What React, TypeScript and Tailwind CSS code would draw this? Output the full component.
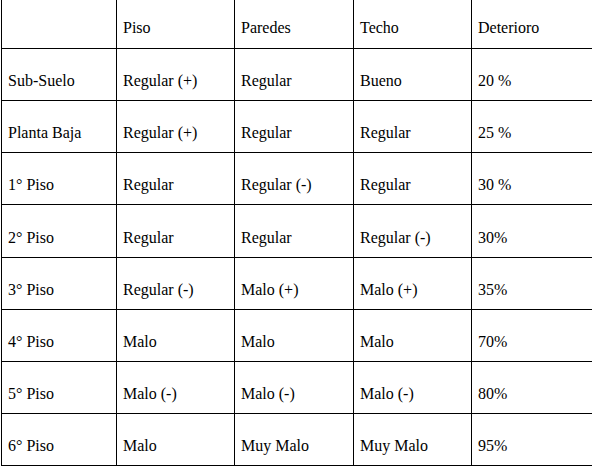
const HEAD = ['', 'Piso', 'Paredes', 'Techo', 'Deterioro'];

const ROWS = [
  ['Sub-Suelo', 'Regular (+)', 'Regular', 'Bueno', '20 %'],
  ['Planta Baja', 'Regular (+)', 'Regular', 'Regular', '25 %'],
  ['1° Piso', 'Regular', 'Regular (-)', 'Regular', '30 %'],
  ['2° Piso', 'Regular', 'Regular', 'Regular (-)', '30%'],
  ['3° Piso', 'Regular (-)', 'Malo (+)', 'Malo (+)', '35%'],
  ['4° Piso', 'Malo', 'Malo', 'Malo', '70%'],
  ['5° Piso', 'Malo (-)', 'Malo (-)', 'Malo (-)', '80%'],
  ['6° Piso', 'Malo', 'Muy Malo', 'Muy Malo', '95%'],
];

function Cell({ text, last, head, tall }: { text: string; last: boolean; head?: boolean; tall?: boolean }) {
  return (
    <div
      className={`flex items-end border-b border-black px-[6px] leading-[18px] whitespace-nowrap ${
        head ? 'h-[49px] pb-[11px]' : tall ? 'h-[53px] pb-[10px]' : 'h-[52px] pb-[10px]'
      } ${last ? '' : 'border-r'}`}
    >
      {text}
    </div>
  );
}

export default function App() {
  return (
    <div className="w-[592px] h-[468px] overflow-hidden bg-white text-black font-['Liberation_Serif','Tinos','Times_New_Roman','DejaVu_Serif',serif]">
      <div className="ml-px grid grid-cols-[115px_118px_119px_118px_1fr] border-l border-black text-[16px]">
        {HEAD.map((h, i) => (
          <Cell key={'h' + i} text={h} last={i === 4} head />
        ))}
        {ROWS.map((row, r) =>
          row.map((c, i) => <Cell key={r + '-' + i} text={c} last={i === 4} tall={r === 3} />)
        )}
      </div>
    </div>
  );
}
